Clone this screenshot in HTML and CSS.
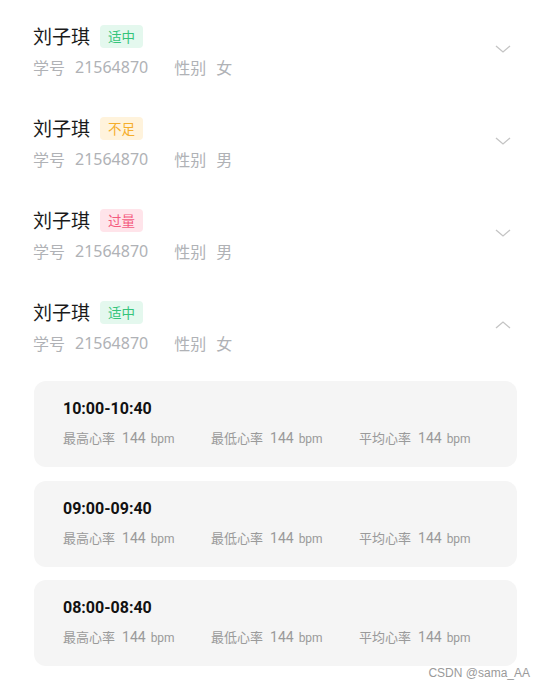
FILE: index.html
```html
<!DOCTYPE html>
<html lang="zh">
<head>
<meta charset="utf-8">
<link rel="stylesheet" href="styles.css">
</head>
<body>
<div class="page">
  <div class="list">
    <div class="row">
      <div class="info">
        <div class="name-line"><span class="name">刘子琪</span><span class="badge ok">适中</span></div>
        <div class="sub"><span>学号</span><span class="num">21564870</span><span class="gap">性别</span><span>女</span></div>
      </div>
      <svg class="chev" viewBox="0 0 16 8" width="16" height="8"><path d="M1 1 L8 7 L15 1" fill="none" stroke="#c4c4c4" stroke-width="1.3"/></svg>
    </div>
    <div class="row">
      <div class="info">
        <div class="name-line"><span class="name">刘子琪</span><span class="badge low">不足</span></div>
        <div class="sub"><span>学号</span><span class="num">21564870</span><span class="gap">性别</span><span>男</span></div>
      </div>
      <svg class="chev" viewBox="0 0 16 8" width="16" height="8"><path d="M1 1 L8 7 L15 1" fill="none" stroke="#c4c4c4" stroke-width="1.3"/></svg>
    </div>
    <div class="row">
      <div class="info">
        <div class="name-line"><span class="name">刘子琪</span><span class="badge over">过量</span></div>
        <div class="sub"><span>学号</span><span class="num">21564870</span><span class="gap">性别</span><span>男</span></div>
      </div>
      <svg class="chev" viewBox="0 0 16 8" width="16" height="8"><path d="M1 1 L8 7 L15 1" fill="none" stroke="#c4c4c4" stroke-width="1.3"/></svg>
    </div>
    <div class="row">
      <div class="info">
        <div class="name-line"><span class="name">刘子琪</span><span class="badge ok">适中</span></div>
        <div class="sub"><span>学号</span><span class="num">21564870</span><span class="gap">性别</span><span>女</span></div>
      </div>
      <svg class="chev up" viewBox="0 0 16 8" width="16" height="8"><path d="M1 7 L8 1 L15 7" fill="none" stroke="#c4c4c4" stroke-width="1.3"/></svg>
    </div>
  </div>
  <div class="cards">
    <div class="card">
      <div class="time">10:00-10:40</div>
      <div class="stats">
        <div class="stat">最高心率<span class="val">144</span><span class="unit">bpm</span></div>
        <div class="stat">最低心率<span class="val">144</span><span class="unit">bpm</span></div>
        <div class="stat">平均心率<span class="val">144</span><span class="unit">bpm</span></div>
      </div>
    </div>
    <div class="card">
      <div class="time">09:00-09:40</div>
      <div class="stats">
        <div class="stat">最高心率<span class="val">144</span><span class="unit">bpm</span></div>
        <div class="stat">最低心率<span class="val">144</span><span class="unit">bpm</span></div>
        <div class="stat">平均心率<span class="val">144</span><span class="unit">bpm</span></div>
      </div>
    </div>
    <div class="card">
      <div class="time">08:00-08:40</div>
      <div class="stats">
        <div class="stat">最高心率<span class="val">144</span><span class="unit">bpm</span></div>
        <div class="stat">最低心率<span class="val">144</span><span class="unit">bpm</span></div>
        <div class="stat">平均心率<span class="val">144</span><span class="unit">bpm</span></div>
      </div>
    </div>
  </div>
  <div class="watermark">CSDN @sama_AA</div>
</div>
</body>
</html>
```

FILE: styles.css
```css
html, body {
  margin: 0;
  padding: 0;
  background: #ffffff;
}
.page {
  position: relative;
  width: 545px;
  height: 689px;
  overflow: hidden;
  font-family: "Noto Sans", "Noto Sans CJK SC", sans-serif;
}
.list {
  padding: 0 0 0 33px;
}
.row {
  height: 92px;
  box-sizing: border-box;
  padding-top: 23px;
  padding-right: 34px;
  display: flex;
  justify-content: space-between;
  align-items: flex-start;
}
.info {
  display: flex;
  flex-direction: column;
  gap: 6px;
}
.name-line {
  display: flex;
  align-items: center;
  height: 26px;
  gap: 10px;
}
.name {
  font-family: "Noto Sans CJK SC", sans-serif;
  font-size: 19px;
  color: #1a1a1a;
  line-height: 26px;
}
.badge {
  display: inline-flex;
  align-items: center;
  justify-content: center;
  width: 43px;
  height: 23px;
  border-radius: 4px;
  font-family: "Noto Sans CJK SC", sans-serif;
  font-size: 13.5px;
}
.badge.ok { background: #e4f8ee; color: #35c47a; }
.badge.low { background: #fff3dc; color: #f5ae2c; }
.badge.over { background: #ffe4ea; color: #f45b7e; }
.sub {
  display: flex;
  align-items: center;
  height: 24px;
  font-size: 16px;
  color: #b0b2b6;
  font-family: "Noto Sans", "Noto Sans CJK SC", sans-serif;
}
.sub .num { margin-left: 10px; }
.sub .gap { margin-left: 26px; margin-right: 10px; }
.chev {
  margin-top: 22px;
  display: block;
}
.cards {
  margin-top: 13px;
  padding: 0 28px 0 34px;
  display: flex;
  flex-direction: column;
  gap: 13.5px;
}
.card {
  height: 86px;
  box-sizing: border-box;
  background: #f5f5f5;
  border-radius: 12px;
  padding: 18px 0 0 29px;
  font-family: Roboto, "Noto Sans CJK SC", sans-serif;
}
.time {
  font-size: 16px;
  font-weight: bold;
  color: #111;
  line-height: 20px;
}
.stats {
  display: grid;
  grid-template-columns: 148px 148px 148px;
  margin-top: 9px;
}
.stat {
  font-size: 13px;
  color: #9a9a9a;
  line-height: 20px;
  white-space: nowrap;
}
.stat .val { font-size: 14px; margin-left: 7px; }
.stat .unit { font-size: 12px; margin-left: 5px; }
.watermark {
  position: absolute;
  right: 15px;
  bottom: 9px;
  font-family: "Liberation Sans", Arial, sans-serif;
  font-size: 12px;
  color: #9a9a9a;
}
```
